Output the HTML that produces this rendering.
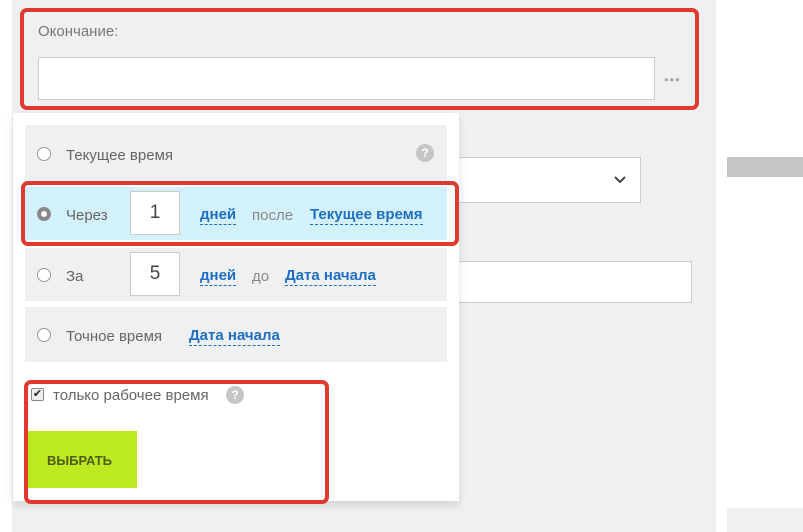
<!DOCTYPE html>
<html><head><meta charset="utf-8"><style>
body{margin:0;width:803px;height:532px;position:relative;overflow:hidden;background:#fff;font-family:"Liberation Sans",sans-serif;}
.a{position:absolute;box-sizing:border-box}
.t{position:absolute;font-size:15px;color:#666;white-space:nowrap;margin-top:2px}
.lnk{position:absolute;font-size:15px;font-weight:bold;color:#1f6fc4;border-bottom:1px dashed #1f6fc4;white-space:nowrap;line-height:18px;margin-top:2px}
.rad{position:absolute;width:14px;height:14px;border:1px solid #999;border-radius:50%;background:#fff;box-sizing:border-box}
.num{position:absolute;width:50px;height:44px;background:#fff;border:1px solid #ccc;box-sizing:border-box;font-size:19px;color:#444;text-align:center;line-height:42px}
.red{position:absolute;border:4px solid #e03a30;border-radius:7px;box-sizing:border-box}
</style></head><body>
<div class="a" style="left:12px;top:0;width:704px;height:532px;background:#eef0f1"></div>
<div class="a" style="left:727px;top:157px;width:76px;height:20px;background:#c6c6c6"></div>
<div class="a" style="left:727px;top:508px;width:76px;height:24px;background:#eef0f1"></div>
<div class="t" style="left:38px;top:21px;color:#777">Окончание:</div>
<div class="a" style="left:38px;top:57px;width:617px;height:43px;background:#fff;border:1px solid #ccc"></div>
<div class="t" style="left:664px;top:70px;color:#aaa;letter-spacing:1px;font-size:13px">•••</div>
<div class="red" style="left:20px;top:8px;width:679px;height:102px"></div>
<div class="a" style="left:440px;top:157px;width:201px;height:46px;background:#fff;border:1px solid #ccc"></div>
<svg class="a" style="left:614px;top:175px" width="12" height="10"><path d="M1 2l5 5 5-5" stroke="#444" stroke-width="2" fill="none"/></svg>
<div class="a" style="left:440px;top:261px;width:252px;height:42px;background:#fff;border:1px solid #ccc"></div>
<div class="a" style="left:13px;top:113px;width:446px;height:388px;background:#fff;box-shadow:0 4px 8px rgba(0,0,0,.12)"></div>
<div class="a" style="left:25px;top:125px;width:422px;height:60px;background:#eef0f1"></div>
<div class="rad" style="left:37px;top:147px"></div>
<div class="t" style="left:66px;top:145px">Текущее время</div>
<div class="a" style="left:416px;top:144px;width:18px;height:18px;border-radius:50%;background:#c4c6c8;color:#fff;font-size:12px;font-weight:bold;text-align:center;line-height:18px">?</div>
<div class="a" style="left:25px;top:187px;width:422px;height:53px;background:#d3f1fb"></div>
<div class="rad" style="left:37px;top:207px;border:4px solid #888"></div>
<div class="t" style="left:66px;top:205px">Через</div>
<div class="num" style="left:130px;top:191px">1</div>
<div class="lnk" style="left:200px;top:204px">дней</div>
<div class="t" style="left:252px;top:205px;color:#888">после</div>
<div class="lnk" style="left:310px;top:204px">Текущее время</div>
<div class="red" style="left:21px;top:181px;width:438px;height:65px"></div>
<div class="a" style="left:25px;top:248px;width:422px;height:53px;background:#eef0f1"></div>
<div class="rad" style="left:37px;top:268px"></div>
<div class="t" style="left:66px;top:266px">За</div>
<div class="num" style="left:130px;top:252px">5</div>
<div class="lnk" style="left:200px;top:265px">дней</div>
<div class="t" style="left:252px;top:266px;color:#888">до</div>
<div class="lnk" style="left:285px;top:265px">Дата начала</div>
<div class="a" style="left:25px;top:307px;width:422px;height:55px;background:#eef0f1"></div>
<div class="rad" style="left:37px;top:328px"></div>
<div class="t" style="left:66px;top:326px">Точное время</div>
<div class="lnk" style="left:189px;top:325px">Дата начала</div>
<div class="a" style="left:31px;top:388px;width:13px;height:13px;border:1px solid #888;background:#eee;border-radius:2px;font-size:11px;line-height:11px;text-align:center;color:#222">✔</div>
<div class="t" style="left:53px;top:385px">только рабочее время</div>
<div class="a" style="left:226px;top:386px;width:18px;height:18px;border-radius:50%;background:#c4c6c8;color:#fff;font-size:12px;font-weight:bold;text-align:center;line-height:18px">?</div>
<div class="a" style="left:28px;top:431px;width:109px;height:57px;background:#bde921"></div>
<div class="t" style="left:47px;top:451px;font-size:13px;font-weight:bold;color:#4f5d18">ВЫБРАТЬ</div>
<div class="red" style="left:24px;top:380px;width:305px;height:124px"></div>
</body></html>
